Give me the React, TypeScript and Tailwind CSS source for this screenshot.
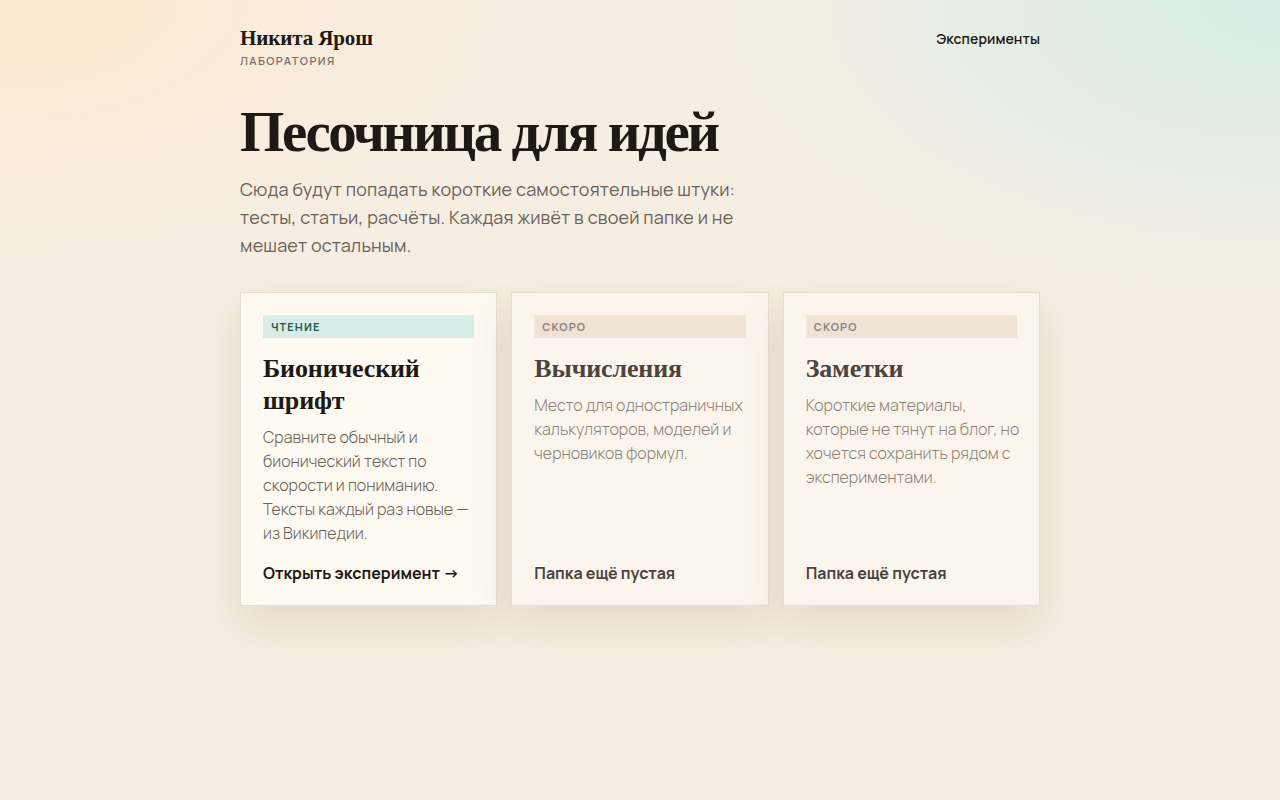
import React from "react";

const sans = "font-['Manrope','Inter','Noto_Sans',sans-serif]";
const serif = "font-['Liberation_Serif','DejaVu_Serif',serif]";

type Card = {
  tag: string;
  title: string;
  desc: string;
  foot: string;
  active: boolean;
};

const cards: Card[] = [
  {
    tag: "ЧТЕНИЕ",
    title: "Бионический шрифт",
    desc: "Сравните обычный и бионический текст по скорости и пониманию. Тексты каждый раз новые — из Википедии.",
    foot: "Открыть эксперимент →",
    active: true,
  },
  {
    tag: "СКОРО",
    title: "Вычисления",
    desc: "Место для одностраничных калькуляторов, моделей и черновиков формул.",
    foot: "Папка ещё пустая",
    active: false,
  },
  {
    tag: "СКОРО",
    title: "Заметки",
    desc: "Короткие материалы, которые не тянут на блог, но хочется сохранить рядом с экспериментами.",
    foot: "Папка ещё пустая",
    active: false,
  },
];

export default function App() {
  return (
    <div
      className={`min-h-[800px] w-full bg-[#f6eee3] ${sans} bg-[radial-gradient(ellipse_520px_260px_at_0%_0%,#fde8cf_0%,rgba(253,232,207,0)_100%),radial-gradient(ellipse_560px_300px_at_100%_0%,#d6ede6_0%,rgba(214,237,230,0)_100%)]`}
    >
      <div className="mx-auto w-[800px] pt-[26px]">
        <header className="flex items-start justify-between">
          <div>
            <div className={`${serif} text-[21px] font-bold leading-[24px] tracking-[-0.005em] text-[#1e1914]`}>
              Никита Ярош
            </div>
            <div className="mt-[4px] text-[11px] font-semibold leading-[14px] tracking-[0.13em] text-[#7a7066]">
              ЛАБОРАТОРИЯ
            </div>
          </div>
          <nav className="pt-[4px] text-[14px] font-semibold leading-[18px] tracking-[0.005em] text-[#1e1914]">
            Эксперименты
          </nav>
        </header>

        <h1
          className={`${serif} mt-[32px] text-[57px] font-bold leading-[64px] tracking-[-0.043em] text-[#1e1914]`}
        >
          Песочница для идей
        </h1>
        <p className="mt-[11px] w-[510px] text-[18px] leading-[28px] tracking-[0.01em] text-[#6b625a]">
          Сюда будут попадать короткие самостоятельные штуки: тесты, статьи, расчёты. Каждая живёт в своей папке и не мешает остальным.
        </p>

        <div className="mt-[33px] grid grid-cols-3 gap-[14px]">
          {cards.map((c) => (
            <div
              key={c.title}
              className={`flex h-[314px] flex-col border border-[#e7ddcf] px-[22px] pb-[21px] pt-[22px] shadow-[0_18px_40px_rgba(120,95,60,0.14)] ${
                c.active ? "bg-[#fef9f1]" : "bg-[#fcf5ed]"
              }`}
            >
              <div
                className={`h-[23px] px-[8px] text-[11px] font-bold leading-[23px] tracking-[0.1em] ${
                  c.active ? "bg-[#d5ede6] text-[#1f5a4f]" : "bg-[#efe3d4] text-[#8d8176]"
                }`}
              >
                {c.tag}
              </div>
              <h2
                className={`${serif} mt-[15px] text-[26px] font-bold leading-[32px] tracking-[-0.005em] ${
                  c.active ? "text-[#1e1914]" : "text-[#4b443e]"
                }`}
              >
                {c.title}
              </h2>
              <p
                className={`mr-[-5px] mt-[8px] text-[16px] font-light leading-[24px] ${
                  c.active ? "text-[#6b625a]" : "text-[#8c837a]"
                }`}
              >
                {c.desc}
              </p>
              <div
                className={`mt-auto text-[16px] font-bold leading-[22px] ${
                  c.active ? "text-[#1e1914]" : "text-[#4b443e]"
                }`}
              >
                {c.foot}
              </div>
            </div>
          ))}
        </div>
      </div>
    </div>
  );
}
